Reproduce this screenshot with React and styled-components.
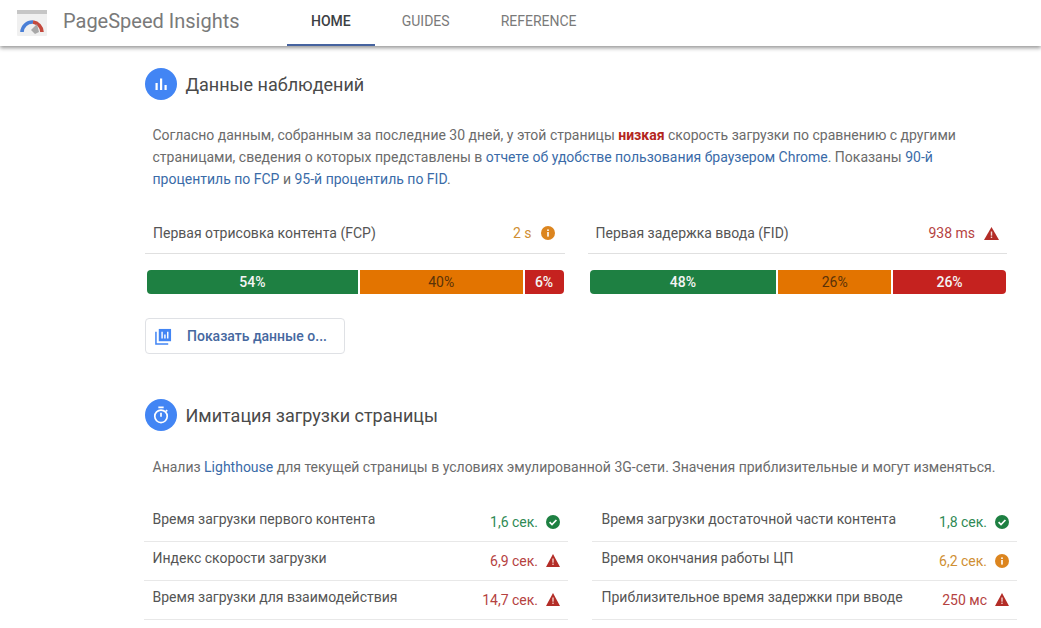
import React from 'react'
import styled, { createGlobalStyle } from 'styled-components'

const Global = createGlobalStyle`
  html, body { margin: 0; padding: 0; background: #fff; }
  body { font-family: Roboto, "Liberation Sans", sans-serif; color: #5f6368; overflow: hidden; height: 628px; }
`

const Header = styled.header`
  height: 46px;
  display: flex;
  align-items: center;
  padding-left: 17px;
  background: #fff;
  box-shadow: 0 2px 4px rgba(0, 0, 0, 0.42);
`

const Brand = styled.div`
  font-size: 20px;
  color: #7a7a7a;
  margin-left: 16px;
  width: 224px;
  margin-top: -4px;
`

const Tabs = styled.nav`
  display: flex;
  gap: 3px;
  height: 100%;
`

const Tab = styled.div`
  padding: 0 24px 3px;
  height: 100%;
  box-sizing: border-box;
  display: flex;
  align-items: center;
  font-size: 14px;
  font-weight: ${p => (p.$active ? 500 : 400)};
  color: ${p => (p.$active ? '#3c4043' : '#7a7a7a')};
  border-bottom: 2px solid ${p => (p.$active ? '#46639f' : 'transparent')};
`

const Main = styled.main`
  padding: 22px 34px 0 145px;
`

const SectionHead = styled.div`
  display: flex;
  align-items: center;
  gap: 8.5px;
  height: 32px;
`

const Badge = styled.div`
  width: 32px;
  height: 32px;
  border-radius: 50%;
  background: #4285f4;
  display: flex;
  align-items: center;
  justify-content: center;
`

const Heading = styled.h2`
  margin: 0;
  font-size: 18px;
  font-weight: 400;
  color: #4a4a4a;
`

const Text = styled.p`
  margin: ${p => p.$margin};
  padding-left: 7.5px;
  font-size: 14px;
  line-height: 22px;
  color: #6b6b6b;
`

const Link = styled.span`
  color: #3a6ba8;
`

const Slow = styled.b`
  color: #b3261e;
  font-weight: 700;
`

const Columns = styled.div`
  display: flex;
  gap: 23px;
  margin-top: 22px;
`

const Field = styled.div`
  width: 420px;
`

const FieldRow = styled.div`
  display: flex;
  align-items: center;
  justify-content: space-between;
  height: 41px;
  padding: 0 ${p => p.$right}px 0 8px;
  border-bottom: 1px solid #e0e0e0;
  font-size: 14px;
  color: #555;
`

const Value = styled.span`
  display: flex;
  align-items: center;
  gap: 9px;
  font-size: 14px;
  color: ${p => p.$color};
  padding-top: 1px;
`

const RowValue = styled(Value)`
  gap: 8px;
  padding-top: 0;
  margin-top: -1px;
`

const Bar = styled.div`
  display: flex;
  gap: 2px;
  height: 24px;
  margin: 16px 1px 0 2px;
  border-radius: 4px;
  overflow: hidden;
`

const Segment = styled.div`
  display: flex;
  align-items: center;
  justify-content: center;
  font-size: 14px;
  font-weight: ${p => (p.$dark ? 400 : 500)};
  color: ${p => (p.$dark ? '#5a3208' : '#f4f4f4')};
  background: ${p => p.$bg};
`

const Button = styled.div`
  width: 200px;
  height: 36px;
  box-sizing: border-box;
  margin: 24px 0 45px;
  display: flex;
  align-items: center;
  gap: 15px;
  padding-left: 9px;
  border: 1px solid #dfe1e5;
  border-radius: 4px;
  font-size: 14px;
  font-weight: 500;
  color: #46689f;
`

const Grid = styled.div`
  display: grid;
  grid-template-columns: 424px 425px;
  column-gap: 24px;
  margin: 25px 0 0 -1px;
`

const Row = styled.div`
  display: flex;
  align-items: center;
  justify-content: space-between;
  height: 38px;
  padding: 0 8px 0 ${p => p.$left}px;
  border-bottom: 1px solid #e8e8e8;
  font-size: 14px;
  color: #555;
`

const Label = styled.span`
  margin-top: -7px;
`

const tones = { good: '#2f8a55', warn: '#b5423f', info: '#cf8f33' }

const Check = () => (
  <svg width="14" height="14" viewBox="0 0 14 14">
    <circle cx="7" cy="7" r="7" fill="#1e8042" />
    <path d="M3.6 7.2l2.4 2.4 4.4-4.6" fill="none" stroke="#fff" strokeWidth="1.7" />
  </svg>
)

const Warn = ({ width = 15 }) => (
  <svg width={width} height="13" viewBox="0 0 15 13" preserveAspectRatio="none">
    <path d="M7.5 0L15 13H0z" fill="#b32d27" />
    <rect x="6.8" y="4.5" width="1.4" height="4.2" fill="#f3d9d6" />
    <rect x="6.8" y="9.6" width="1.4" height="1.4" fill="#f3d9d6" />
  </svg>
)

const Info = () => (
  <svg width="14" height="14" viewBox="0 0 14 14">
    <circle cx="7" cy="7" r="7" fill="#dc851f" />
    <rect x="6.2" y="6" width="1.6" height="4.6" fill="#fff" />
    <rect x="6.2" y="3.4" width="1.6" height="1.6" fill="#fff" />
  </svg>
)

const StatusIcon = ({ kind, warnWidth }) => {
  if (kind === 'good') return <Check />
  if (kind === 'info') return <Info />
  return <Warn width={warnWidth} />
}

const Logo = () => (
  <svg width="30" height="26" viewBox="0 0 30 26">
    <rect width="30" height="26" rx="1" fill="#f0f0f0" />
    <rect width="30" height="4" fill="#c6c6c6" />
    <path d="M5 22a10.5 10.5 0 0 1 11-10" fill="none" stroke="#4a7fd6" strokeWidth="3.6" />
    <path d="M16 12a10.5 10.5 0 0 1 9 10" fill="none" stroke="#c4483c" strokeWidth="3.6" />
    <path d="M20 14l-6 6 4 4 4-2z" fill="#a8a8a8" />
  </svg>
)

const Metric = ({ label, value, kind, right, segments }) => (
  <Field>
    <FieldRow $right={right}>
      {label}
      <Value $color={tones[kind]}>{value} <StatusIcon kind={kind} /></Value>
    </FieldRow>
    <Bar>
      {segments.map(s => (
        <Segment key={s.bg} $bg={s.bg} $dark={s.dark} style={{ flexBasis: s.width }}>{s.text}</Segment>
      ))}
    </Bar>
  </Field>
)

const rows = [
  ['Время загрузки первого контента', '1,6 сек.', 'good', 'Время загрузки достаточной части контента', '1,8 сек.', 'good'],
  ['Индекс скорости загрузки', '6,9 сек.', 'warn', 'Время окончания работы ЦП', '6,2 сек.', 'info'],
  ['Время загрузки для взаимодействия', '14,7 сек.', 'warn', 'Приблизительное время задержки при вводе', '250 мс', 'warn'],
]

export default function App() {
  return (
    <>
      <Global />
      <Header>
        <Logo />
        <Brand>PageSpeed Insights</Brand>
        <Tabs>
          <Tab $active>HOME</Tab>
          <Tab>GUIDES</Tab>
          <Tab>REFERENCE</Tab>
        </Tabs>
      </Header>
      <Main>
        <SectionHead>
          <Badge>
            <svg width="14" height="14" viewBox="0 0 14 14" fill="#fff">
              <rect x="1.5" y="6" width="2.2" height="7" />
              <rect x="6" y="1.5" width="2.2" height="11.5" />
              <rect x="10.5" y="8" width="2.2" height="5" />
            </svg>
          </Badge>
          <Heading>Данные наблюдений</Heading>
        </SectionHead>
        <Text $margin="24px 0 0">
          Согласно данным, собранным за последние 30 дней, у этой страницы <Slow>низкая</Slow> скорость загрузки по сравнению с другими<br />
          страницами, сведения о которых представлены в <Link>отчете об удобстве пользования браузером Chrome</Link>. Показаны <Link>90-й</Link><br />
          <Link>процентиль по FCP</Link> и <Link>95-й процентиль по FID</Link>.
        </Text>
        <Columns>
          <Metric
            label="Первая отрисовка контента (FCP)"
            value="2 s"
            kind="info"
            right={10}
            segments={[
              { bg: '#1e8042', text: '54%', width: '211px' },
              { bg: '#e37400', text: '40%', width: '163px', dark: true },
              { bg: '#c5221f', text: '6%', width: '39px' },
            ]}
          />
          <Metric
            label="Первая задержка ввода (FID)"
            value="938 ms"
            kind="warn"
            right={8}
            segments={[
              { bg: '#1e8042', text: '48%', width: '187px' },
              { bg: '#e37400', text: '26%', width: '113px', dark: true },
              { bg: '#c5221f', text: '26%', width: '113px' },
            ]}
          />
        </Columns>
        <Button>
          <svg width="17" height="17" viewBox="0 0 18 18" fill="none">
            <path d="M1 4v13h13" stroke="#4285f4" strokeWidth="1.6" />
            <rect x="4" y="1" width="13" height="13" fill="#4285f4" />
            <path d="M7.5 4v7M10.5 7v4M13.5 4v7" stroke="#fff" strokeWidth="1.5" />
          </svg>
          Показать данные о...
        </Button>
        <SectionHead>
          <Badge>
            <svg width="16" height="18" viewBox="0 0 18 20" fill="none" stroke="#fff" strokeWidth="1.9">
              <circle cx="9" cy="11.5" r="7" />
              <path d="M6 1.5h6M9 7.5v4.5" />
              <path d="M14.5 4.5l1.5 1.5" />
            </svg>
          </Badge>
          <Heading>Имитация загрузки страницы</Heading>
        </SectionHead>
        <Text $margin="25px 0 0">
          Анализ <Link>Lighthouse</Link> для текущей страницы в условиях эмулированной 3G-сети. Значения приблизительные и могут изменяться.
        </Text>
        <Grid>
          {rows.flatMap(r => [
            <Row key={r[0]} $left={8.5}>
              <Label>{r[0]}</Label>
              <RowValue $color={tones[r[2]]}>{r[1]} <StatusIcon kind={r[2]} warnWidth={14} /></RowValue>
            </Row>,
            <Row key={r[3]} $left={9.5}>
              <Label>{r[3]}</Label>
              <RowValue $color={tones[r[5]]}>{r[4]} <StatusIcon kind={r[5]} warnWidth={14} /></RowValue>
            </Row>,
          ])}
        </Grid>
      </Main>
    </>
  )
}
